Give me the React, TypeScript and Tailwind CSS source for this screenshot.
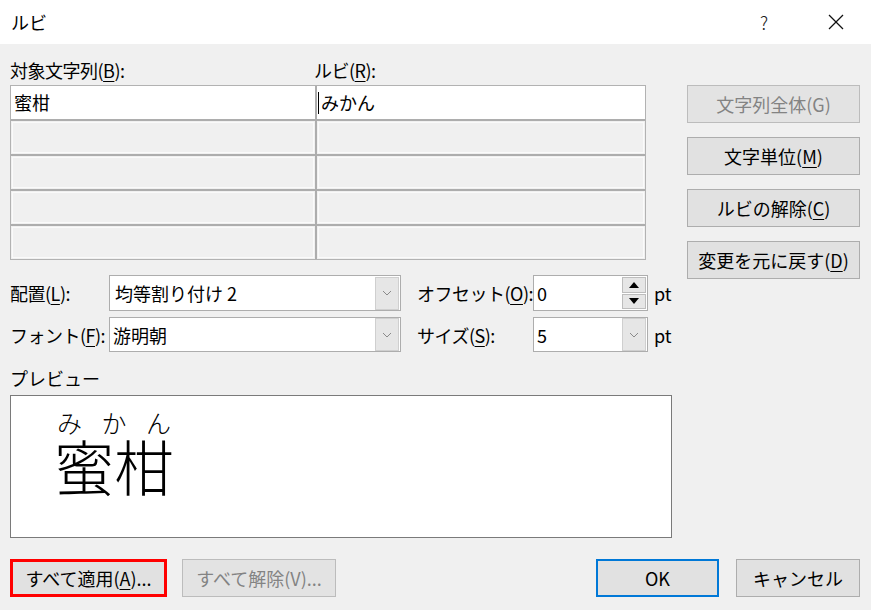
import React from 'react';

const font = { fontFamily: '"Noto Sans CJK JP", "Noto Sans", sans-serif' };

const Acc: React.FC<{ k: string }> = ({ k }) => (
  <span className="underline underline-offset-[3px] decoration-1">{k}</span>
);

const Btn: React.FC<{
  children: React.ReactNode;
  className?: string;
  disabled?: boolean;
  edge?: string;
}> = ({ children, className = '', disabled, edge }) => {
  const look = disabled
    ? 'bg-[#e3e3e3] border border-[#bcbcbc] text-[#838383]'
    : `bg-[#e1e1e1] text-black ${edge ?? 'border border-[#adadad]'}`;
  return (
    <div
      className={`h-[38px] shrink-0 whitespace-nowrap flex items-center justify-center text-[18px] leading-[24px] ${look} ${className}`}
    >
      {children}
    </div>
  );
};

const DropButton: React.FC = () => (
  <div className="w-[24px] h-[33px] shrink-0 my-auto mr-[1px] bg-[#e6e6e6] border border-[#cfcfcf] flex items-center justify-center">
    <svg width="10" height="6" viewBox="0 0 10 6">
      <polyline points="1,1 5,5 9,1" fill="none" stroke="#8a8a8a" strokeWidth="1" />
    </svg>
  </div>
);

const Spinner: React.FC = () => (
  <div className="w-[24px] h-[32px] shrink-0 my-auto mr-[1px] flex flex-col gap-[1px]">
    <div className="flex-1 bg-[#e6e6e6] border border-[#bdbdbd] flex items-center justify-center">
      <svg width="10" height="6" viewBox="0 0 10 6">
        <polygon points="0,6 5,0 10,6" fill="#000" />
      </svg>
    </div>
    <div className="flex-1 bg-[#e6e6e6] border border-[#bdbdbd] flex items-center justify-center">
      <svg width="10" height="6" viewBox="0 0 10 6">
        <polygon points="0,0 10,0 5,6" fill="#000" />
      </svg>
    </div>
  </div>
);

const EmptyCell: React.FC<{ w: string }> = ({ w }) => (
  <div className={`${w} h-full p-[1px] bg-[#f0f0f0]`}>
    <div className="h-full border border-[#fafafa]" />
  </div>
);

const Label: React.FC<{ w: string; children: React.ReactNode; className?: string }> = ({ w, children, className = '' }) => (
  <span className={`${w} shrink-0 whitespace-nowrap tracking-[-0.5px] ${className}`}>{children}</span>
);

const App: React.FC = () => {
  const rows = [0, 1, 2, 3];
  return (
    <div className="w-[871px] h-[610px] bg-[#f0f0f0] text-black overflow-hidden" style={font}>
      {/* title bar */}
      <div className="h-[44px] bg-white flex items-center pl-[11px]">
        <span className="text-[18px] leading-[24px]">ルビ</span>
        <span className="ml-auto text-[18px] leading-[24px] font-light text-[#222]">?</span>
        <svg className="ml-[60px] mr-[27px]" width="16" height="16" viewBox="0 0 16 16">
          <line x1="1" y1="1" x2="15" y2="15" stroke="#111" strokeWidth="1.2" />
          <line x1="15" y1="1" x2="1" y2="15" stroke="#111" strokeWidth="1.2" />
        </svg>
      </div>

      <div className="pl-[10px]">
        {/* grid + side buttons (buttons run past the grid's bottom) */}
        <div className="flex items-start h-[216px] pt-[13px]">
          <div className="w-[636px] shrink-0">
            <div className="flex h-[26px] items-center text-[18px] leading-[26px]">
              <Label w="w-[304px]">
                対象文字列(<Acc k="B" />):
              </Label>
              <Label w="">
                ルビ(<Acc k="R" />):
              </Label>
            </div>
            <div className="mt-[2px] border border-[#b2b2b2] bg-[#adadad]">
              <div className="flex h-[33px]">
                <div className="w-[304px] bg-white flex items-center pl-[3px] text-[18px]">蜜柑</div>
                <div className="w-[2px]" />
                <div className="flex-1 bg-white flex items-center pl-[1px] text-[18px]">
                  <span className="w-[1px] h-[22px] bg-black mr-[2px]" />
                  みかん
                </div>
              </div>
              {rows.map((r) => (
                <div key={r} className="flex h-[33px] mt-[2px]">
                  <EmptyCell w="w-[304px]" />
                  <div className="w-[2px]" />
                  <EmptyCell w="flex-1" />
                </div>
              ))}
            </div>
          </div>
          <div className="ml-[41px] w-[173px] shrink-0 pt-[28px] flex flex-col gap-[14px]">
            <Btn disabled>文字列全体(G)</Btn>
            <Btn>
              文字単位(<Acc k="M" />)
            </Btn>
            <Btn>
              ルビの解除(<Acc k="C" />)
            </Btn>
            <Btn>
              変更を元に戻す(<Acc k="D" />)
            </Btn>
          </div>
        </div>

        {/* option rows */}
        <div className="mt-[15px] flex flex-col gap-[6px] text-[18px] leading-[24px]">
          <div className="flex h-[36px] items-center">
            <Label w="w-[99px]">
              配置(<Acc k="L" />):
            </Label>
            <div className="w-[292px] shrink-0 h-full bg-white border border-[#adadad] flex">
              <span className="flex-1 pl-[5px] self-center whitespace-nowrap">均等割り付け 2</span>
              <DropButton />
            </div>
            <Label w="w-[116px]" className="ml-[16px]">
              オフセット(<Acc k="O" />):
            </Label>
            <div className="w-[115px] shrink-0 h-full bg-white border border-[#adadad] flex">
              <span className="flex-1 pl-[3px] self-center">0</span>
              <Spinner />
            </div>
            <span className="ml-[6px]">pt</span>
          </div>
          <div className="flex h-[35px] items-center">
            <Label w="w-[99px]">
              フォント(<Acc k="F" />):
            </Label>
            <div className="w-[292px] shrink-0 h-full bg-white border border-[#adadad] flex">
              <span className="flex-1 pl-[3px] self-center">游明朝</span>
              <DropButton />
            </div>
            <Label w="w-[116px]" className="ml-[16px]">
              サイズ(<Acc k="S" />):
            </Label>
            <div className="w-[115px] shrink-0 h-full bg-white border border-[#adadad] flex">
              <span className="flex-1 pl-[3px] self-center">5</span>
              <DropButton />
            </div>
            <span className="ml-[6px]">pt</span>
          </div>
        </div>

        {/* preview */}
        <div className="mt-[13px] h-[26px] flex items-center text-[18px] leading-[26px]">プレビュー</div>
        <div className="mt-[4px] w-[662px] h-[143px] bg-white border border-[#7a7a7a] pl-[43px] pt-[13px]">
          <div className="w-[120px] flex justify-between px-[3px] text-[25px] leading-[26px] font-light">
            <span>み</span>
            <span>か</span>
            <span>ん</span>
          </div>
          <div className="text-[60px] leading-[60px] font-light">蜜柑</div>
        </div>

        {/* bottom buttons */}
        <div className="mt-[21px] flex pr-[11px]">
          <Btn className="w-[157px]" edge="border-[3px] border-[#ff0000]">
            すべて適用(<Acc k="A" />)...
          </Btn>
          <Btn disabled className="ml-[15px] w-[154px]">
            すべて解除(V)...
          </Btn>
          <Btn className="ml-auto w-[123px]" edge="border-2 border-[#0078d7]">
            OK
          </Btn>
          <Btn className="ml-[17px] w-[124px]">キャンセル</Btn>
        </div>
      </div>
    </div>
  );
};

export default App;
